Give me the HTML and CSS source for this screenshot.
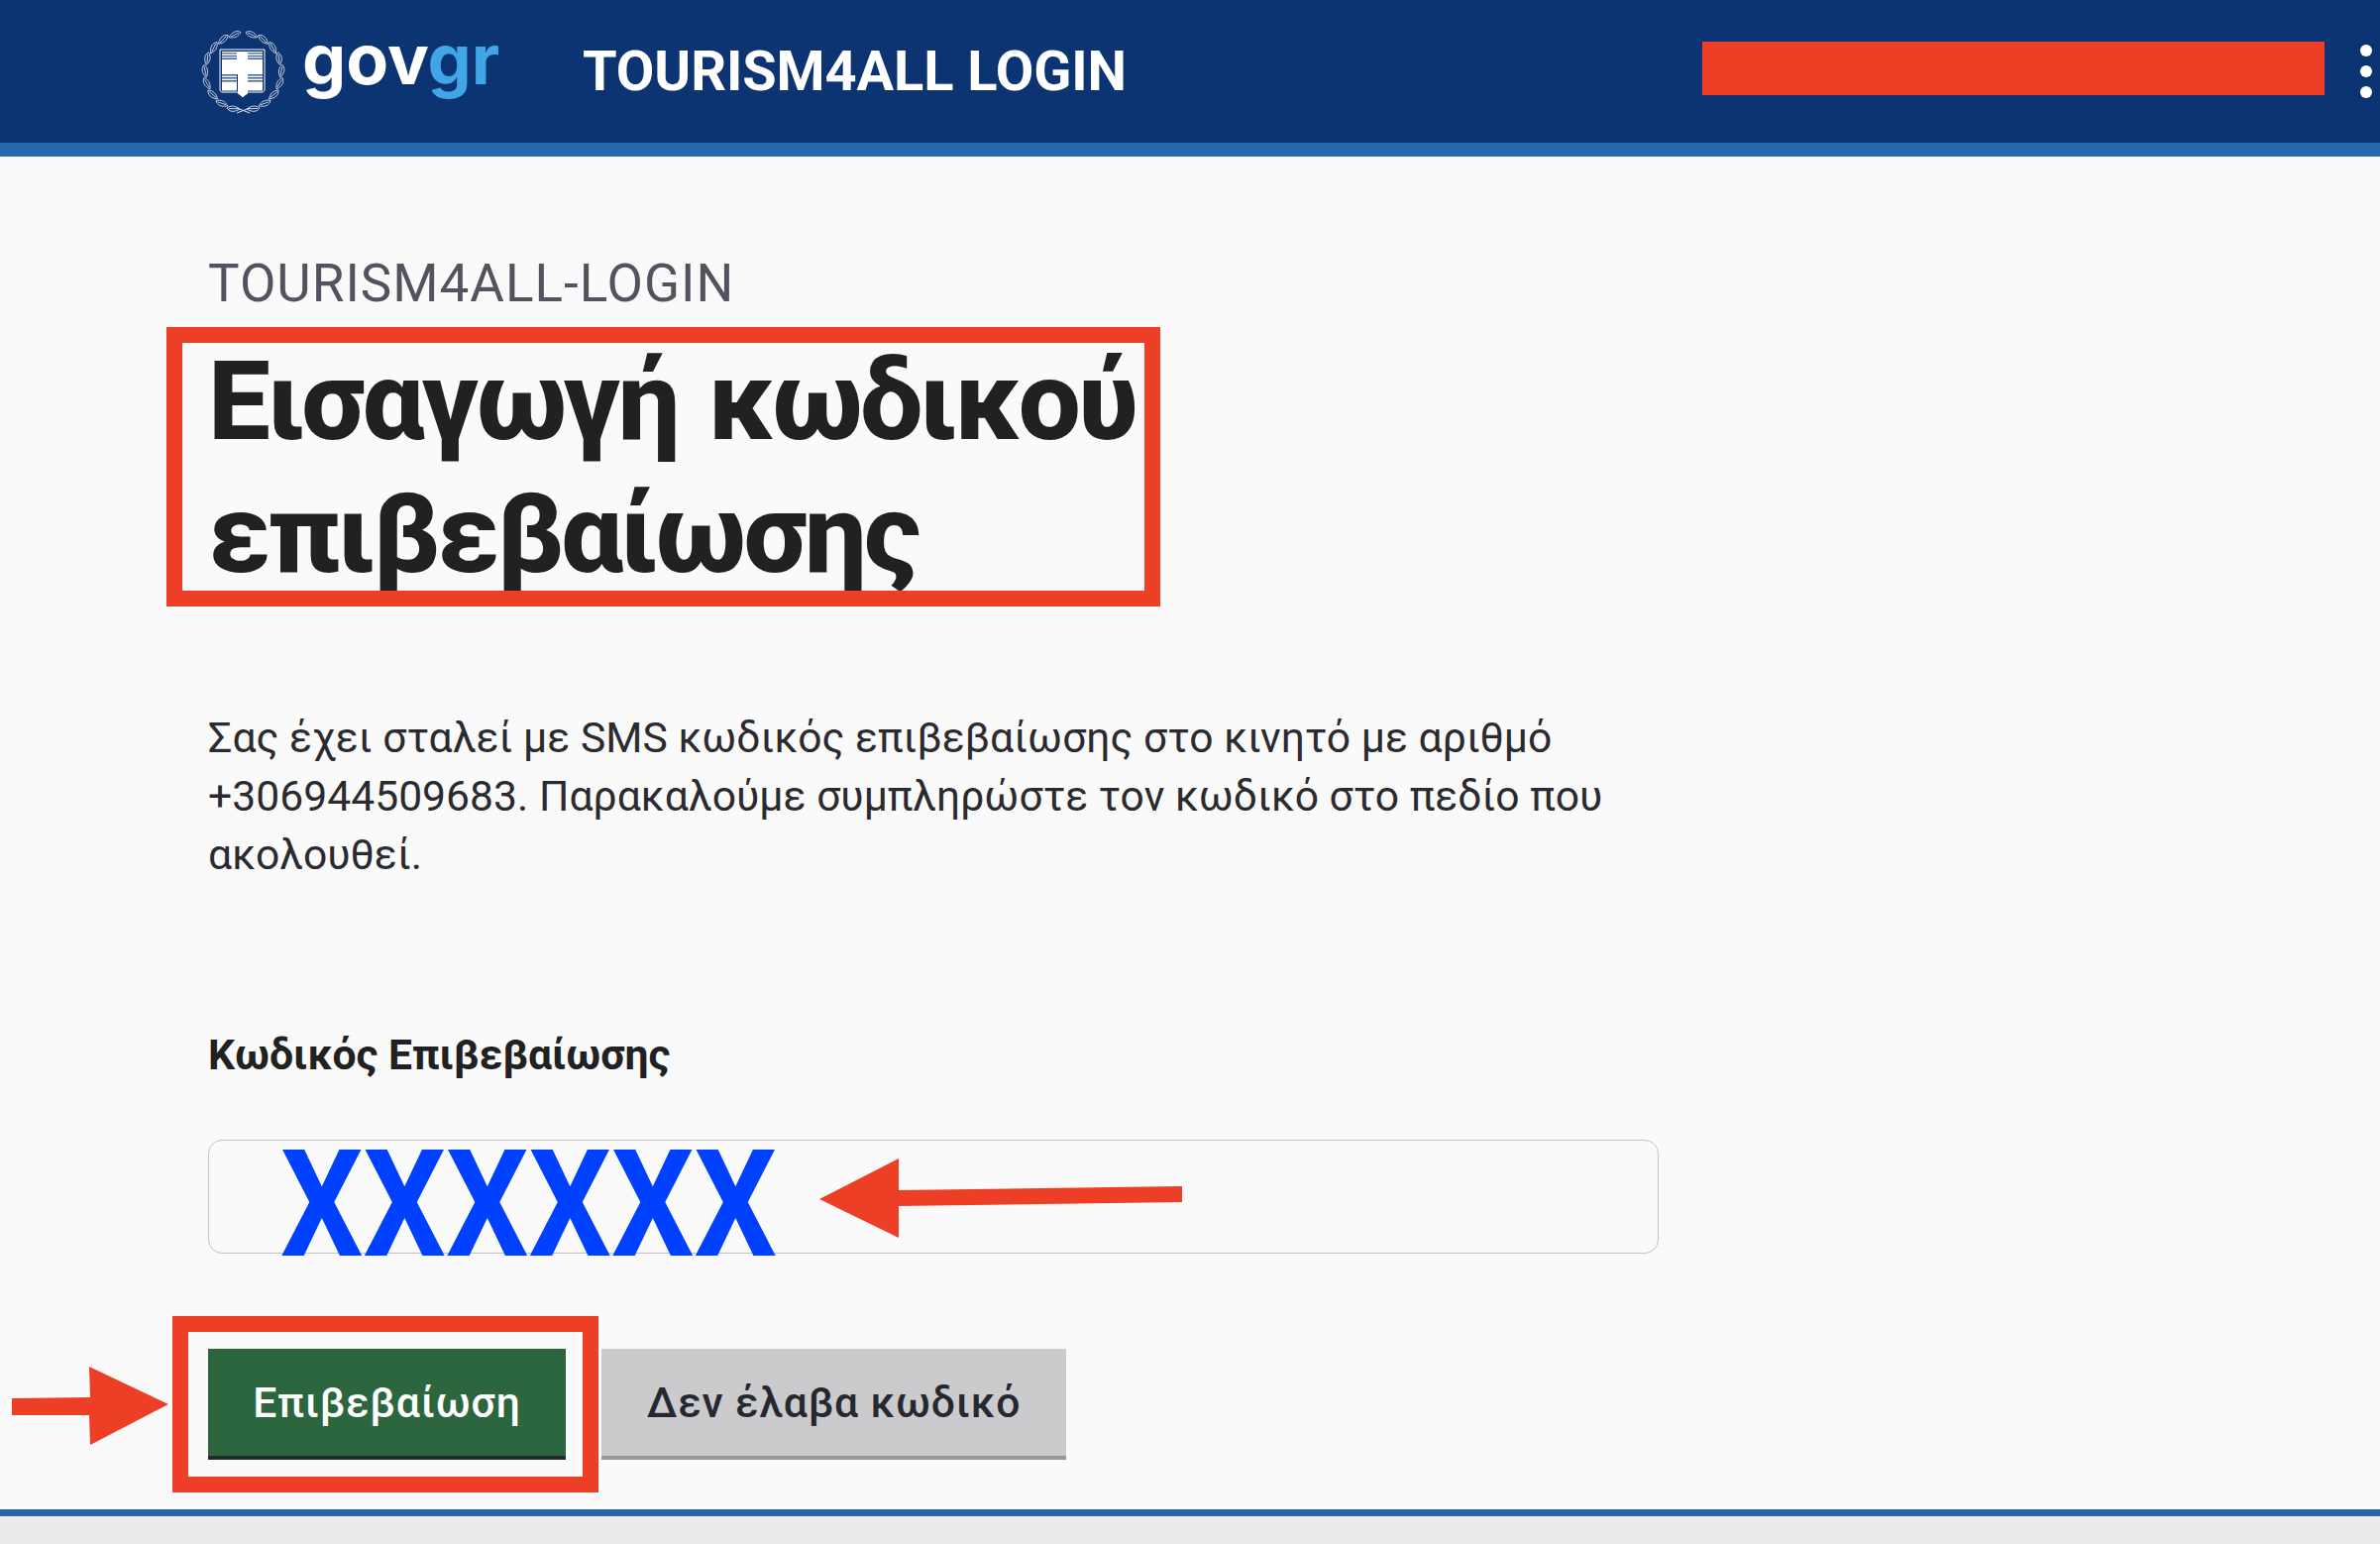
FILE: index.html
```html
<!DOCTYPE html>
<html lang="el">
<head>
<meta charset="utf-8">
<title>TOURISM4ALL LOGIN</title>
<link rel="stylesheet" href="styles.css">
</head>
<body>
<header class="topbar">
  <a class="brand">
    <svg class="emblem" viewBox="0 0 85 85" aria-hidden="true">
      <defs>
        <path id="leaf" d="M57 7.500C53 1.500 49 .500 45 2.500C47 7 52 9 57 7.500ZM55 7L47 3" fill="none" stroke="#dfe7f2" stroke-width=".8"/>
        <g id="half">
          <use href="#leaf"/>
          <use href="#leaf" transform="rotate(19 42.500 42.500)"/>
          <use href="#leaf" transform="rotate(38 42.500 42.500)"/>
          <use href="#leaf" transform="rotate(57 42.500 42.500)"/>
          <use href="#leaf" transform="rotate(76 42.500 42.500)"/>
          <use href="#leaf" transform="rotate(95 42.500 42.500)"/>
          <use href="#leaf" transform="rotate(114 42.500 42.500)"/>
          <use href="#leaf" transform="rotate(133 42.500 42.500)"/>
          <use href="#leaf" transform="rotate(152 42.500 42.500)"/>
        </g>
      </defs>
      <use href="#half"/>
      <use href="#half" transform="translate(85 0) scale(-1 1)"/>
      <path d="M36 79L49 84M49 79L36 84" fill="none" stroke="#dfe7f2" stroke-width="1"/>
      <path d="M19 20h45v40c0 2-1 3-3 3H47l-5 5-5-5H22c-2 0-3-1-3-3z" fill="none" stroke="#fff" stroke-width="1"/>
      <path d="M21 22h15v8h-15zM47 22h15v8H47zM21 45h15v15c0 1-.500 1.500-1.500 1.500H21zM47 45h15v16.500H47z" fill="#fff"/>
      <path d="M21 23.200h15v1.300H21zM47 23.200h15v1.300H47zM21 25.900h15v1.300H21zM47 25.900h15v1.300H47zM21 28.600h15v1.400H21zM47 28.600h15v1.400H47zM21 45h15v1.500H21zM47 45h15v1.500H47zM21 48h15v1.500H21zM47 48h15v1.500H47zM21 51h15v1.500H21zM47 51h15v1.500H47z" fill="#3f6098"/>
      <path d="M36 22h11v8h15v15H47v19.500l-5 3.500-5-3.500V45H21V30h15z" fill="#fff"/>
    </svg>
    <span class="brand-text">gov<span class="brand-accent">gr</span></span>
  </a>
  <span class="service-name">TOURISM4ALL LOGIN</span>
  <span class="redaction"></span>
  <span class="kebab"><i></i><i></i><i></i></span>
</header>

<main class="content">
  <span class="caption">TOURISM4ALL-LOGIN</span>
  <h1 class="title">Εισαγωγή κωδικού επιβεβαίωσης</h1>
  <p class="lead">Σας έχει σταλεί με SMS κωδικός επιβεβαίωσης στο κινητό με αριθμό +306944509683. Παρακαλούμε συμπληρώστε τον κωδικό στο πεδίο που ακολουθεί.</p>
  <label class="field-label">Κωδικός Επιβεβαίωσης</label>
  <div class="code-input"><span class="code-mask">XXXXXX</span></div>
  <div class="actions">
    <button class="btn btn-primary">Επιβεβαίωση</button>
    <button class="btn btn-secondary">Δεν έλαβα κωδικό</button>
  </div>
</main>

<footer class="footer"></footer>

<div class="mark mark-title"></div>
<div class="mark mark-button"></div>
<svg class="arrows" viewBox="0 0 2402 1558" aria-hidden="true">
  <path class="arrow" d="M827 1210L907 1169V1201L1193 1197V1213L907 1217V1249Z"/>
  <path class="arrow" d="M170 1417L91 1458L90 1428L12 1428V1411L91 1410L90 1379Z"/>
</svg>
</body>
</html>
```

FILE: styles.css
```css
* { box-sizing: border-box; }
html, body { margin: 0; padding: 0; }
body {
  position: relative;
  width: 2402px;
  height: 1558px;
  overflow: hidden;
  background: #fafafa;
  color: #212121;
  font-family: Roboto, "Noto Sans", sans-serif;
  display: flex;
  flex-direction: column;
}
.topbar {
  height: 158px;
  flex: none;
  background: #0d3472;
  border-bottom: 14px solid #2667ae;
  display: flex;
  align-items: flex-start;
  padding-left: 203px;
}
.brand { display: flex; align-items: flex-start; width: 385px; padding-top: 30px; }
.emblem { width: 85px; height: 85px; flex: none; }
.brand-text {
  margin: -15px 0 0 17px;
  font-family: Inter, sans-serif;
  font-weight: 700;
  font-size: 70px;
  line-height: 90px;
  letter-spacing: 0;
  color: #fff;
}
.brand-accent { color: #41a6e8; }
.service-name {
  font-weight: 700;
  font-size: 56px;
  line-height: 66px;
  margin-top: 39px;
  letter-spacing: -.1px;
  color: #fff;
}
.redaction {
  width: 628px;
  height: 54px;
  margin: 42px 0 0 auto;
  background: #ed3f25;
}
.kebab {
  display: flex;
  flex-direction: column;
  gap: 9px;
  margin: 45px 8px 0 36px;
}
.kebab i { display: block; width: 12px; height: 12px; border-radius: 50%; background: #fff; }

.content {
  flex: 1;
  padding: 98px 0 0 210px;
  display: flex;
  flex-direction: column;
  align-items: flex-start;
}
.caption {
  font-size: 53px;
  line-height: 60px;
  letter-spacing: 1px;
  color: #53535f;
}
.title {
  margin: 22px 0 0;
  width: 1000px;
  font-size: 112px;
  line-height: 134px;
  font-weight: 800;
  letter-spacing: -2.8px;
  word-spacing: 6px;
}
.lead {
  margin: 109px 0 0;
  width: 1463px;
  font-size: 42.6px;
  line-height: 59px;
  letter-spacing: .05px;
  color: #2a2a2f;
}
.field-label {
  margin-top: 142px;
  font-size: 42.6px;
  line-height: 60px;
  font-weight: 700;
}
.code-input {
  margin-top: 56px;
  width: 1464px;
  height: 115px;
  border: 1.5px solid #c4c4c4;
  border-radius: 14px;
}
.code-mask {
  display: block;
  width: 500px;
  margin: 0 0 0 72px;
  font-weight: 700;
  font-size: 150px;
  line-height: 130px;
  color: #0040ff;
  transform: scaleX(.877);
  transform-origin: left top;
  white-space: nowrap;
}
.actions { display: flex; gap: 36px; margin-top: 96px; }
.btn {
  height: 112px;
  padding: 0;
  border: 0;
  border-bottom: 4px solid;
  font-family: inherit;
  font-size: 42.6px;
  font-weight: 500;
  letter-spacing: .9px;
  white-space: nowrap;
}
.btn-primary { width: 361px; background: #2c663e; color: #fff; border-color: #262830; }
.btn-secondary { width: 469px; background: #cbcbcd; color: #262830; border-color: #98989b; }
.footer {
  height: 35px;
  flex: none;
  background: #ebebeb;
  border-top: 7px solid #2667ae;
}
.mark { position: absolute; border: 16px solid #ed3f25; }
.mark-title { left: 168px; top: 330px; width: 1003px; height: 282px; }
.mark-button { left: 174px; top: 1328px; width: 430px; height: 178px; }
.arrows { position: absolute; left: 0; top: 0; width: 2402px; height: 1558px; pointer-events: none; }
.arrow { fill: #ed3f25; }
```
